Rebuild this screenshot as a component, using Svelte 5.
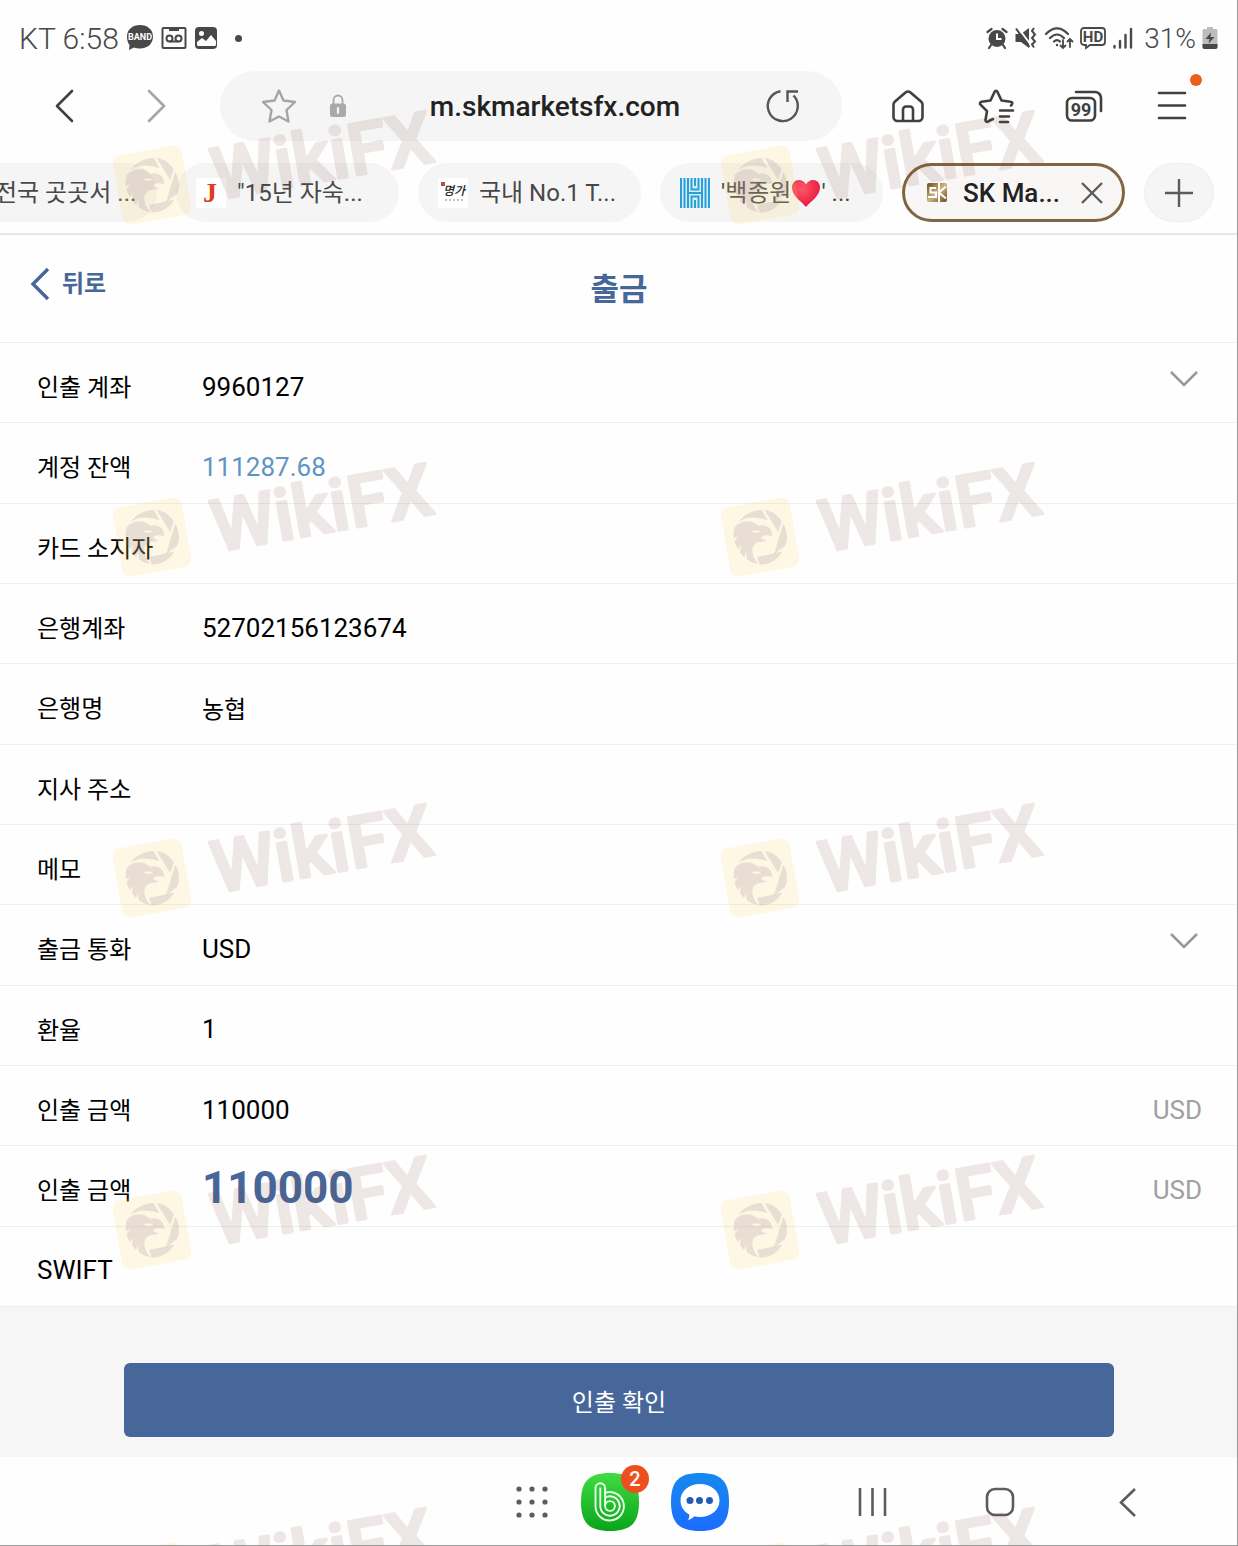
<script>
  let account = '9960127'
  let currency = 'USD'
  let amount = '110000'

  const rows = [
    { id: 'account', label: '인출 계좌', type: 'select' },
    { id: 'balance', label: '계정 잔액', type: 'output', value: '111287.68', style: 'balance' },
    { id: 'holder', label: '카드 소지자', type: 'input', value: '' },
    { id: 'bankAccount', label: '은행계좌', type: 'input', value: '52702156123674' },
    { id: 'bankName', label: '은행명', type: 'input', value: '농협', style: 'korean' },
    { id: 'branch', label: '지사 주소', type: 'input', value: '' },
    { id: 'memo', label: '메모', type: 'input', value: '' },
    { id: 'currency', label: '출금 통화', type: 'select' },
    { id: 'rate', label: '환율', type: 'output', value: '1' },
    { id: 'amount', label: '인출 금액', type: 'amount', unit: 'USD' },
    { id: 'total', label: '인출 금액', type: 'total', unit: 'USD' },
    { id: 'swift', label: 'SWIFT', type: 'input', value: '', latin: true }
  ]

  const marks = []
  for (const top of [105, 457, 798, 1150, 1502]) {
    for (const left of [107, 715]) marks.push({ top, left })
  }
</script>

<div class="screen">
  <div class="statusBar">
    <span class="clock">KT 6:58</span>
    <svg class="band" width="28" height="28" viewBox="0 0 28 28">
      <path d="M14 1C6.500 1 1 5.500 1 12.500c0 4 1 6.500 2.500 8.500L3 26l5-2.500c2 .8 4 1 6 1 8 0 13-5 13-12S21.500 1 14 1z" fill="#484848" />
      <text x="14" y="16" text-anchor="middle" font-size="9" font-weight="700" fill="#fff">BAND</text>
    </svg>
    <svg width="26" height="24" viewBox="0 0 26 24" fill="none" stroke="#484848" stroke-width="2">
      <rect x="1.500" y="2" width="23" height="20" rx="1" />
      <path d="M8 2h10v3H8z" fill="#484848" stroke="none" />
      <circle cx="8.500" cy="12.500" r="3" /><circle cx="17.500" cy="12.500" r="3" /><path d="M8.500 15.500h9" />
    </svg>
    <svg width="24" height="24" viewBox="0 0 24 24">
      <rect x="1" y="1" width="22" height="22" rx="4" fill="#484848" />
      <circle cx="7.500" cy="7.500" r="2.500" fill="#fff" />
      <path d="M3 16l5-4 4 3 5-6 5 6v3.500a1.500 1.500 0 0 1-1.500 1.500h-16A1.500 1.500 0 0 1 3 18.500z" fill="#fff" />
    </svg>
    <span class="moreDot"></span>
    <div class="system">
      <svg width="22" height="24" viewBox="0 0 22 24">
        <circle cx="11" cy="12.500" r="8.500" fill="#484848" />
        <path d="M1.500 6L5.500 3M20.500 6L16.500 3M5 19l-2 3M17 19l2 3" stroke="#484848" stroke-width="2.200" stroke-linecap="round" />
        <path d="M11 7.500v5.500h4.500" fill="none" stroke="#fff" stroke-width="2" />
      </svg>
      <svg width="24" height="24" viewBox="0 0 24 24">
        <path d="M1.500 8H7l8-6v20l-8-6H1.500z" fill="#484848" />
        <path d="M3.500 1L17 19" stroke="#fefefe" stroke-width="2" />
        <path d="M2 2.500L15.500 21" stroke="#484848" stroke-width="2" />
        <path d="M20 2l-2 3 3 3.500-3 3.500 3 3.500-3 3 2 3" fill="none" stroke="#484848" stroke-width="2" />
      </svg>
      <svg width="30" height="24" viewBox="0 0 30 24" fill="none" stroke="#484848" stroke-width="2.200" stroke-linecap="round">
        <path d="M2 8Q13-3 24 8M6 12q7-7 14 0M10 15.500q3-3 6 0" />
        <circle cx="13" cy="19" r="1.200" fill="#484848" stroke="none" />
        <path d="M19 14v8m-2.500-2.500L19 22l2.500-2.500M26 21v-8m-2.500 2.500L26 13l2.500 2.500" stroke-width="1.800" />
      </svg>
      <svg width="26" height="24" viewBox="0 0 26 24">
        <path d="M4 2h18a3 3 0 0 1 3 3v11a3 3 0 0 1-3 3H10l-4 3v-3H4a3 3 0 0 1-3-3V5a3 3 0 0 1 3-3z" fill="none" stroke="#484848" stroke-width="1.800" />
        <text x="13" y="15.500" text-anchor="middle" font-size="15" font-weight="700" fill="#484848">HD</text>
      </svg>
      <svg width="22" height="24" viewBox="0 0 22 24" stroke="#484848" stroke-width="2.400" stroke-linecap="round">
        <path d="M2.500 20v1.500M8 15v6.500M13.500 9v12.500M19 3v18.500" />
      </svg>
      <span class="percent">31%</span>
      <svg width="16" height="24" viewBox="0 0 16 24">
        <path d="M5 1h6v2h3a1.500 1.500 0 0 1 1.500 1.500v16.500a2 2 0 0 1-2 2h-11a2 2 0 0 1-2-2V4.500A1.500 1.500 0 0 1 2 3h3z" fill="#bcbcbc" />
        <path d="M.5 18h15v3a2 2 0 0 1-2 2h-11a2 2 0 0 1-2-2z" fill="#484848" />
        <path d="M9 6.500L3.500 13h4L6.500 17.500 12.500 11h-4z" fill="#484848" />
      </svg>
    </div>
  </div>

  <div class="toolbar">
    <button class="tool" aria-label="Back">
      <svg width="40" height="40" viewBox="0 0 40 40"><path d="M27 5L12 20l15 15" /></svg>
    </button>
    <button class="tool forward" aria-label="Forward">
      <svg width="40" height="40" viewBox="0 0 40 40"><path d="M13 5l15 15-15 15" /></svg>
    </button>
    <div class="address">
      <button class="bookmark" aria-label="Bookmark">
        <svg width="40" height="40" viewBox="0 0 40 40"><path d="M20 4.500l4.500 10 11.500 1.500-8.500 8 2 11.500L20 30.500l-9.500 5 2-11.500L4 16l11.500-1.500z" /></svg>
      </button>
      <svg class="lock" width="18" height="24" viewBox="0 0 18 24">
        <path d="M4.500 10V6a4.500 4.500 0 0 1 9 0v4" fill="none" stroke="#a9a9a9" stroke-width="1.800" />
        <rect x="1" y="9.500" width="16" height="13.500" rx="2.500" fill="#a9a9a9" />
        <path d="M9 14v5" stroke="#f5f5f5" stroke-width="2.200" stroke-linecap="round" />
      </svg>
      <input class="url" type="text" aria-label="Address" value="m.skmarketsfx.com" />
      <button class="reload" aria-label="Reload">
        <svg width="40" height="40" viewBox="0 0 40 40"><path d="M17.500 5.200A15 15 0 1 0 30.500 9.500M35 5.500H24.500V16" /></svg>
      </button>
    </div>
    <div class="tools">
      <button class="tool" aria-label="Home">
        <svg width="40" height="40" viewBox="0 0 40 40"><path d="M5.500 18.500a4 4 0 0 1 1.500-3L17.500 6.500a4 4 0 0 1 5 0L33 15.500a4 4 0 0 1 1.500 3V31a4 4 0 0 1-4 4h-21a4 4 0 0 1-4-4zM15 35V23.500a3 3 0 0 1 3-3h4a3 3 0 0 1 3 3V35" /></svg>
      </button>
      <button class="tool" aria-label="Bookmarks">
        <svg width="40" height="40" viewBox="0 0 40 40"><path d="M35 19.500c1-1 2.500-3.500-.5-3.800l-9-1.200-4-8.500c-.7-1.500-2.300-1.500-3 0l-4 8.500-9 1.200c-1.500.3-2 2-1 3l6.500 6.500-1.500 8.500c-.3 1.600 1 2.500 2.500 1.800l5-2.500M24 24.500h13M24 30.500h9M24 36h8" /></svg>
      </button>
      <button class="tool" aria-label="Tabs">
        <svg width="40" height="40" viewBox="0 0 40 40">
          <rect x="3" y="12" width="28" height="22.500" rx="5" /><path d="M12 6h19a6 6 0 0 1 6 6v13" />
          <text x="17" y="29.500" text-anchor="middle" font-size="18" font-weight="700">99</text>
        </svg>
      </button>
      <button class="tool" aria-label="Menu">
        <svg width="40" height="40" viewBox="0 0 40 40"><path d="M7 7h26M7 19.500h26M7 32h26" /></svg>
        <span class="alert"></span>
      </button>
    </div>
  </div>

  <div class="tabs">
    <button class="tab"><span class="favicon"></span><span>전국 곳곳서 ...</span></button>
    <button class="tab">
      <svg class="favicon" width="30" height="30" viewBox="0 0 30 30">
        <rect width="30" height="30" fill="#fff" /><text class="serif" x="14" y="24" text-anchor="middle" font-size="28" font-weight="700" fill="#e23c1c">J</text>
      </svg>
      <span>"15년 자숙...</span>
    </button>
    <button class="tab">
      <svg class="favicon" width="30" height="30" viewBox="0 0 30 30">
        <rect width="30" height="30" fill="#fff" />
        <rect x="3" y="4" width="4" height="4" fill="#b64a48" />
        <text class="brush" x="16" y="17" text-anchor="middle" font-size="12" font-weight="500" fill="#222">명가</text>
        <path d="M7 22h18" stroke="#aaa" stroke-width="1.500" stroke-dasharray="2 2" />
      </svg>
      <span>국내 No.1 T...</span>
    </button>
    <button class="tab">
      <svg class="favicon" width="30" height="30" viewBox="0 0 30 30">
        <rect width="30" height="30" fill="#d6eefa" />
        <path d="M1 0v30M4.500 0v30M8 0v30M22 0v30M25.500 0v30M29 0v30M11.500 0v11.500h7V0M15 0v8M11.500 30V18.500h7V30M15 30v-8M8 15h14" fill="none" stroke="#2c9fd6" stroke-width="2" />
      </svg>
      <span>'백종원</span>
      <svg width="30" height="30" viewBox="0 0 30 30">
        <defs><radialGradient id="heart" cx=".35" cy=".3" r=".8"><stop offset="0" stop-color="#ff5a68" /><stop offset="1" stop-color="#e4103c" /></radialGradient></defs>
        <path d="M15 29C10 23 1 18 1 9.500 1 5 4 2 8 2c3 0 5.500 1.500 7 4.500C16.500 3.500 19 2 22 2c4 0 7 3 7 7.500C29 18 20 23 15 29z" fill="url(#heart)" />
      </svg>
      <span>' ...</span>
    </button>
    <div class="tab active">
      <svg class="favicon" width="30" height="30" viewBox="0 0 30 30">
        <defs><linearGradient id="gold" x2="1" y2="1"><stop offset="0" stop-color="#6a4c1c" /><stop offset=".5" stop-color="#cdb47c" /><stop offset="1" stop-color="#6a4c1c" /></linearGradient></defs>
        <rect x="5" y="5" width="20" height="19" rx="2" fill="url(#gold)" />
        <path d="M14 10H8.500v4.500H14V19H6M17 5v19M24 8.500l-7 6 7 6" fill="none" stroke="#fff" stroke-width="2" />
      </svg>
      <a href="#tab">SK Ma...</a>
      <button class="close" aria-label="Close tab">
        <svg width="24" height="24" viewBox="0 0 24 24"><path d="M2 2l20 20M22 2L2 22" /></svg>
      </button>
    </div>
    <button class="newTab" aria-label="New tab">
      <svg width="32" height="32" viewBox="0 0 32 32"><path d="M16 2v28M2 16h28" /></svg>
    </button>
  </div>

  <header>
    <a class="back" href="#back">
      <svg width="20" height="34" viewBox="0 0 20 34"><path d="M18 2L3 17l15 15" /></svg>
      <span>뒤로</span>
    </a>
    <h1>출금</h1>
  </header>

  <form on:submit|preventDefault>
    <div class="rows">
      {#each rows as row}
        <div class="row">
          <label for={row.id} class:latin={row.latin}>{row.label}</label>
          {#if row.id === 'account'}
            <select id="account" bind:value={account}><option>9960127</option></select>
          {:else if row.id === 'currency'}
            <select id="currency" bind:value={currency}><option>USD</option></select>
          {:else if row.type === 'amount'}
            <input id="amount" type="text" bind:value={amount} />
          {:else if row.type === 'total'}
            <output id="total" class="total">{amount}</output>
          {:else if row.type === 'output'}
            <output id={row.id} class={row.style}>{row.value}</output>
          {:else}
            <input id={row.id} type="text" class={row.style} value={row.value} />
          {/if}
          {#if row.type === 'select'}
            <svg class="arrow" width="30" height="18" viewBox="0 0 30 18"><path d="M2 2l13 13L28 2" /></svg>
          {/if}
          {#if row.unit}<span class="unit">{row.unit}</span>{/if}
        </div>
      {/each}
    </div>
    <div class="submitArea">
      <button class="submit" type="submit">인출 확인</button>
    </div>
  </form>

  <nav class="dock">
    <button aria-label="Apps">
      <svg width="34" height="34" viewBox="0 0 34 34" fill="#5c5c5c">
        {#each [4, 17, 30] as y}
          {#each [4, 17, 30] as x}<circle cx={x} cy={y} r="2.600" />{/each}
        {/each}
      </svg>
    </button>
    <button class="app" aria-label="Band">
      <svg width="58" height="58" viewBox="0 0 58 58" fill="none">
        <defs><linearGradient id="green" x2="0" y2="1"><stop offset="0" stop-color="#3fdc42" /><stop offset="1" stop-color="#0aa41c" /></linearGradient></defs>
        <path d="M29 0C50 0 58 8 58 29S50 58 29 58 0 50 0 29 8 0 29 0z" fill="url(#green)" />
        <g stroke="#e8ffe8" stroke-width="1.900">
          <path d="M14.500 15a4.800 4.800 0 0 1 9.600 0v4.800A14.200 14.200 0 1 1 14.500 33z" />
          <path d="M19.300 14.500V33a9.700 9.700 0 1 0 4.800-8.400V19.500M24.100 24.600V33" />
          <circle cx="29" cy="33" r="4.900" />
        </g>
      </svg>
      <span class="badge">2</span>
    </button>
    <button class="app chat" aria-label="Messages">
      <svg width="58" height="58" viewBox="0 0 58 58">
        <defs><linearGradient id="blue" x2="0" y2="1"><stop offset="0" stop-color="#1689ee" /><stop offset="1" stop-color="#1c6cff" /></linearGradient></defs>
        <path d="M29 0C50 0 58 8 58 29S50 58 29 58 0 50 0 29 8 0 29 0z" fill="url(#blue)" />
        <path d="M29 11c11 0 19.500 7 19.500 16.500S40 44 29 44c-2 0-4-.2-5.500-.7-2 1.800-4 3.200-6.500 3.700 1-1.700 1.500-3.500 1.300-5.500C13 39 9.500 33.500 9.500 27.500 9.500 18 18 11 29 11z" fill="#fff" />
        <circle cx="19" cy="27.500" r="3.500" fill="#2459b8" /><circle cx="28.500" cy="27.500" r="3.500" fill="#2459b8" /><circle cx="38.500" cy="27.500" r="3.500" fill="#2459b8" />
      </svg>
    </button>
    <div class="systemKeys">
      <button aria-label="Recents"><svg width="34" height="34" viewBox="0 0 34 34"><path d="M5 3v28M17.500 3v28M30 3v28" /></svg></button>
      <button aria-label="Home"><svg width="34" height="34" viewBox="0 0 34 34"><rect x="4" y="4" width="26" height="26" rx="8" /></svg></button>
      <button aria-label="Back"><svg width="34" height="34" viewBox="0 0 34 34"><path d="M24 4L10 17.500 24 31" /></svg></button>
    </div>
  </nav>

  <div class="watermarks" aria-hidden="true">
    {#each marks as mark}
      <svg width="345" height="130" viewBox="0 0 345 130" style="top: {mark.top}px; left: {mark.left}px">
        <g transform="translate(45 80) rotate(-10)">
          <rect x="-35" y="-35" width="70" height="70" rx="8" fill="#fad76e" fill-opacity=".18" />
          <text x="61" y="26" font-size="72">WikiFX</text>
        </g>
        <!-- eagle inside a camera aperture -->
        <g transform="translate(-2 31) scale(.333)" fill="#9a7f96" fill-opacity=".2">
          <path d="M76 102C92 80 118 67 146 66l17 30q-30-10-56-7-18 3-31 13z" />
          <path d="M155 66c22 3 40 15 51 34l-10 32z" />
          <path d="M211 107c15 25 13 50 5 67l-33 26z" />
          <path d="M133 207l75-16c-16 28-42 40-68 39z" />
          <path d="M66 116c12-14 34-20 52-14 9 3 12 9 20 12 14-3 30 0 36 14 3 6 4 12 3 18-8-5-17-5-27-2l-6 5c5 6 11 6 18 9-10 4-20 3-27 5-10 4-17 12-17 24 0 17 9 31 19 42-12-2-25-7-35-15l-4-24-4 18c-5-4-9-9-13-14l3-22-9 12c-4-7-8-15-10-23l10-17-12 7c-2-12-1-24 3-35zM116 129c5 5 13 7 22 5l6-4c-8-3-17-3-28-1z" fill-rule="evenodd" />
        </g>
      </svg>
    {/each}
  </div>
</div>

<style>
  :global(body) {
    margin: 0;
    background: #fefefe;
  }

  .screen {
    position: relative;
    display: flex;
    flex-direction: column;
    min-height: 100vh;
    overflow: hidden;
    background: #fefefe;
    color: #000;
    font-family: Roboto, 'Noto Sans CJK KR', sans-serif;
    font-size: 26px;
  }

  /* thin frame on the right and bottom edge */
  .screen::after {
    content: '';
    position: absolute;
    inset: 0;
    border-right: 1px solid #999;
    border-bottom: 1px solid #999;
    pointer-events: none;
  }

  svg {
    display: block;
    flex: none;
  }

  button,
  input,
  select {
    margin: 0;
    padding: 0;
    border: none;
    background: none;
    color: inherit;
    font: inherit;
    outline: none;
  }

  a {
    color: inherit;
    text-decoration: none;
  }

  /* status bar */
  .statusBar {
    display: flex;
    align-items: center;
    gap: 7px;
    height: 71px;
    padding: 5px 20px 0 19px;
    box-sizing: border-box;
    color: #484848;
    font-size: 28px;
    font-weight: 300;
  }

  .clock {
    font-size: 30px;
  }

  .moreDot {
    width: 7px;
    height: 7px;
    margin-left: 10px;
    border-radius: 50%;
    background: #484848;
  }

  .system {
    display: flex;
    align-items: center;
    gap: 6px;
    margin-left: auto;
  }

  .percent {
    margin-left: 4px;
  }

  /* browser toolbar */
  .toolbar {
    display: flex;
    align-items: center;
    height: 70px;
    padding: 0 36px 0 35px;
  }

  .tool {
    position: relative;
    display: flex;
    flex: none;
    justify-content: center;
    width: 60px;
  }

  .forward {
    margin: 0 34px 0 31px;
  }

  .tool path,
  .tool rect {
    fill: none;
    stroke: #404040;
    stroke-width: 2.6;
    stroke-linecap: round;
    stroke-linejoin: round;
  }

  .tool text {
    fill: #404040;
  }

  .forward path {
    stroke: #a5a5a5;
  }

  .tools {
    display: flex;
    gap: 28px;
    margin-left: 36px;
  }

  .alert {
    position: absolute;
    top: -12px;
    right: 0;
    width: 12px;
    height: 12px;
    border-radius: 50%;
    background: #e8601c;
  }

  .address {
    display: flex;
    flex: 1;
    align-items: center;
    min-width: 0;
    height: 70px;
    padding: 0 39px;
    box-sizing: border-box;
    border-radius: 35px;
    background: #f5f5f5;
  }

  .bookmark path {
    fill: none;
    stroke: #a5a5a5;
    stroke-width: 2.4;
    stroke-linejoin: round;
  }

  .lock {
    margin-left: 30px;
  }

  .url {
    flex: 1;
    min-width: 0;
    color: #222;
    font-size: 28px;
    font-weight: 500;
    text-align: center;
  }

  .reload path {
    fill: none;
    stroke: #555;
    stroke-width: 2.4;
  }

  /* tab strip */
  .tabs {
    display: flex;
    justify-content: flex-end;
    gap: 19px;
    padding: 22px 24px 11px 0;
    border-bottom: 2px solid #e6e6e6;
  }

  .tab {
    display: flex;
    flex: none;
    align-items: center;
    width: 223px;
    height: 59px;
    padding: 0 20px;
    box-sizing: border-box;
    border-radius: 30px;
    background: #f5f5f5;
    color: #484848;
    font-size: 24px;
    line-height: 30px;
    white-space: pre;
  }

  .favicon {
    width: 30px;
    height: 30px;
    margin-right: 11px;
  }

  .serif {
    font-family: 'Liberation Serif', serif;
  }

  .brush {
    font-style: italic;
  }

  .active {
    padding: 0 18px 0 17px;
    border: 3px solid #80653e;
    background: #f9f7f6;
    color: #222;
    font-size: 26px;
    font-weight: 500;
  }

  .close {
    margin-left: auto;
  }

  .close path,
  .newTab path {
    fill: none;
    stroke: #5c5c5c;
    stroke-width: 2.4;
  }

  .newTab {
    display: flex;
    flex: none;
    align-items: center;
    justify-content: center;
    width: 70px;
    height: 59px;
    box-sizing: border-box;
    border: 1px solid #eee;
    border-radius: 30px;
    background: #f5f5f5;
  }

  /* page header */
  header {
    display: grid;
    grid-template-columns: 1fr auto 1fr;
    align-items: center;
    height: 107px;
    border-bottom: 1px solid #edf0f0;
    color: #47669a;
  }

  .back {
    display: flex;
    align-items: center;
    gap: 12px;
    margin-bottom: 10px;
    padding-left: 30px;
    font-size: 24px;
    font-weight: 700;
  }

  .back span {
    padding-bottom: 4px;
  }

  .back path {
    fill: none;
    stroke: #47669a;
    stroke-width: 3.4;
  }

  h1 {
    margin: 0;
    padding-bottom: 4px;
    font-size: 31px;
    font-weight: 700;
  }

  /* withdrawal form */
  form {
    display: flex;
    flex: 1;
    flex-direction: column;
  }

  .rows {
    display: grid;
    flex: 1;
    grid-auto-rows: 1fr;
  }

  .row {
    display: flex;
    align-items: center;
    padding: 8px 36px 0 37px;
    border-bottom: 1px solid #edf0f0;
  }

  label {
    flex: none;
    width: 165px;
    padding-bottom: 2px;
    font-size: 24px;
    white-space: nowrap;
  }

  label.latin {
    padding-bottom: 0;
    font-size: 26px;
  }

  .row input,
  .row select,
  output {
    flex: 1;
    min-width: 0;
    appearance: none;
  }

  .row .korean {
    font-size: 24px;
  }

  .balance {
    color: #5f95c4;
  }

  .total {
    padding-bottom: 4px;
    color: #47669a;
    font-size: 44px;
    font-weight: 700;
    line-height: 52px;
  }

  .arrow {
    margin: 0 3px 16px 0;
  }

  .arrow path {
    fill: none;
    stroke: #999;
    stroke-width: 2.6;
  }

  .unit {
    color: #a0a0a0;
  }

  .submitArea {
    height: 150px;
    padding: 56px 10% 0;
    box-sizing: border-box;
    background: #f7f6f7;
  }

  .submit {
    width: 100%;
    height: 74px;
    border-radius: 6px;
    background: #47669a;
    color: #fff;
    font-size: 24px;
  }

  /* bottom dock */
  .dock {
    display: flex;
    align-items: center;
    justify-content: flex-end;
    gap: 20px;
    height: 89px;
    padding-right: 81px;
  }

  .dock button {
    position: relative;
    display: flex;
    justify-content: center;
    width: 58px;
  }

  .dock .chat {
    margin-left: 12px;
  }

  .badge {
    position: absolute;
    top: -8px;
    right: -10px;
    width: 28px;
    height: 28px;
    border-radius: 50%;
    background: #ee4f1e;
    color: #fff;
    font-size: 20px;
    font-weight: 500;
    line-height: 28px;
    text-align: center;
  }

  .systemKeys {
    display: flex;
    gap: 70px;
    margin-left: 94px;
  }

  .systemKeys path,
  .systemKeys rect {
    fill: none;
    stroke: #5c5c5c;
    stroke-width: 2.6;
  }

  /* repeated brand mark over the whole screen */
  .watermarks {
    position: absolute;
    inset: 0;
    overflow: hidden;
    pointer-events: none;
  }

  .watermarks svg {
    position: absolute;
    overflow: visible;
  }

  .watermarks text {
    fill: #784638;
    stroke: #784638;
    stroke-width: 3;
    stroke-linejoin: round;
    font-weight: 500;
    opacity: 0.12;
  }
</style>
